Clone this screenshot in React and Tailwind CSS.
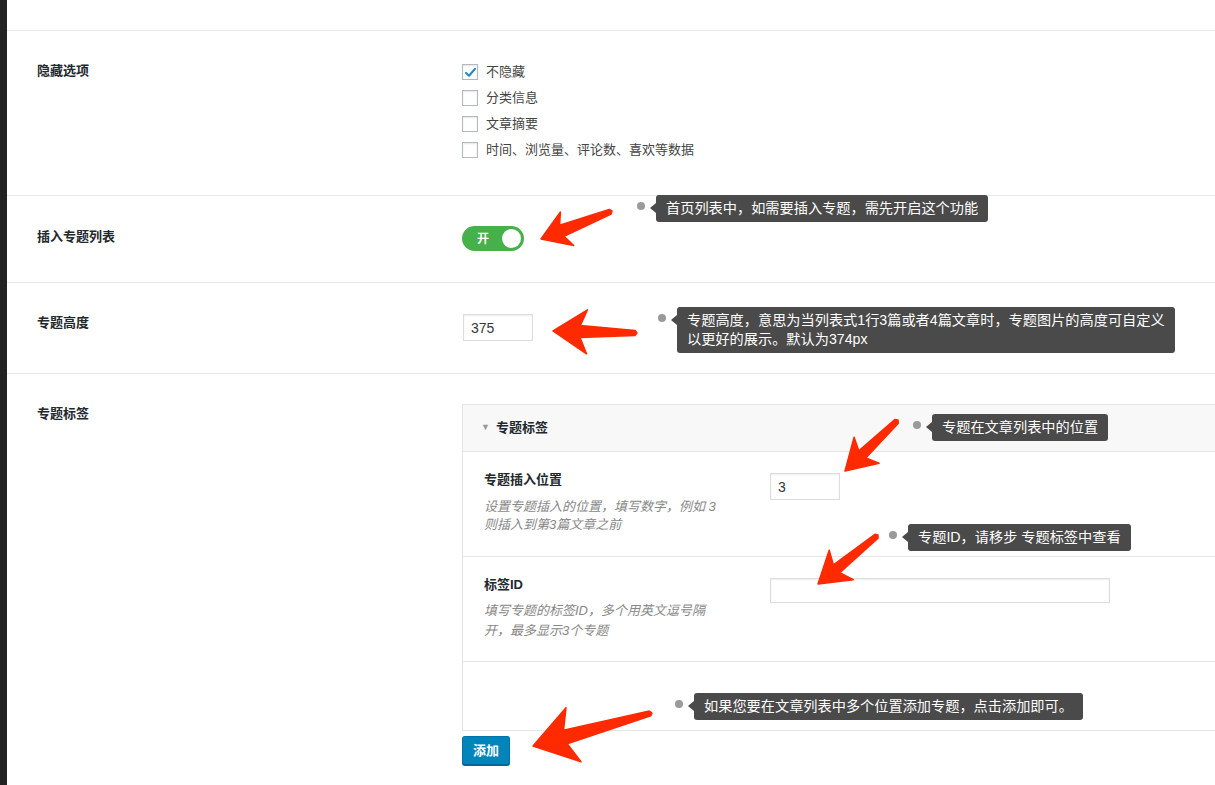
import React from "react";

/**
 * Settings page: hide options, topic-list toggle, topic height and the
 * topic-tag repeater, with screenshot annotations (tooltips + red arrows).
 */

const FONT = "font-['Liberation_Sans','Noto_Sans_CJK_SC',sans-serif]";

const HIDE_OPTIONS = [
  { label: "不隐藏", checked: true },
  { label: "分类信息", checked: false },
  { label: "文章摘要", checked: false },
  { label: "时间、浏览量、评论数、喜欢等数据", checked: false },
];

// annotation bubbles: box left/top, dot sits just left of the box
const TIPS = [
  { x: 656, y: 195, lines: ["首页列表中，如需要插入专题，需先开启这个功能"] },
  {
    x: 677, y: 307,
    lines: ["专题高度，意思为当列表式1行3篇或者4篇文章时，专题图片的高度可自定义", "以更好的展示。默认为374px"],
  },
  { x: 932, y: 414, lines: ["专题在文章列表中的位置"] },
  { x: 908, y: 524, lines: ["专题ID，请移步 专题标签中查看"] },
  { x: 694, y: 693, lines: ["如果您要在文章列表中多个位置添加专题，点击添加即可。"] },
];

// red arrows: tail -> tip, head length / half width
const ARROWS = [
  { tail: [612, 211], tip: [541, 239], hl: 28, hw: 18, sw: 6 },
  { tail: [637, 333], tip: [553, 331], hl: 34, hw: 22, sw: 6 },
  { tail: [898, 420], tip: [845, 471], hl: 30, hw: 18, sw: 5 },
  { tail: [878, 535], tip: [818, 584], hl: 30, hw: 19, sw: 5 },
  { tail: [652, 713], tip: [533, 746], hl: 42, hw: 28, sw: 7 },
];

function arrowPoints({ tail, tip, hl, hw, sw }) {
  const dx = tail[0] - tip[0];
  const dy = tail[1] - tip[1];
  const L = Math.hypot(dx, dy);
  const ux = dx / L, uy = dy / L;
  const nx = -uy, ny = ux;
  const local = [
    [0, 0], [hl, -hw], [hl * 0.8, -sw], [L - 2, -2.5], [L, 0],
    [L - 2, 2.5], [hl * 0.8, sw], [hl, hw],
  ];
  return local
    .map(([a, b]) => `${(tip[0] + ux * a + nx * b).toFixed(1)},${(tip[1] + uy * a + ny * b).toFixed(1)}`)
    .join(" ");
}

export default function App() {
  return (
    <div className={`relative flex min-h-[785px] w-full bg-white text-[#23282d] ${FONT}`}>
      <div className="w-[7px] shrink-0 bg-[#222]" />

      <div className="min-w-0 flex-1">
        <div className="h-[31px] border-b border-[#eaeaea]" />

        <Row label="隐藏选项" labelPad="pt-[27px]">
          <div className="pb-[32px] pt-[28px]">
            {HIDE_OPTIONS.map((o) => (
              <label key={o.label} className="flex h-[26px] items-center gap-[8px] text-[13px] text-[#444]">
                <Checkbox checked={o.checked} />
                <span>{o.label}</span>
              </label>
            ))}
          </div>
        </Row>

        <Row label="插入专题列表" labelPad="pt-[28px]">
          <div className="pb-[31px] pt-[30px]">
            <div className="flex h-[25px] w-[62px] items-center justify-between rounded-full bg-[#46b04a] pl-[15px] pr-[3px]">
              <span className="text-[12px] font-bold text-white">开</span>
              <span className="h-[19px] w-[19px] rounded-full bg-white" />
            </div>
          </div>
        </Row>

        <Row label="专题高度" labelPad="pt-[27px]">
          <div className="pb-[32px] pl-[1px] pt-[31px]">
            <input
              readOnly
              value="375"
              className="h-[27px] w-[70px] border border-[#ddd] px-[7px] text-[14px] text-[#32373c] shadow-[inset_0_1px_2px_rgba(0,0,0,0.07)] outline-none"
            />
          </div>
        </Row>

        <div className="flex">
          <div className="w-[455px] shrink-0 pl-[30px] pt-[27px]">
            <span className="text-[13px] font-semibold leading-[20px]">专题标签</span>
          </div>
          <div className="min-w-0 flex-1 pt-[30px]">
            <div className="border-y border-l border-[#e5e5e5]">
              <div className="flex h-[47px] items-center gap-[6px] border-b border-[#e5e5e5] bg-[#f8f8f8] pl-[18px]">
                <span className="text-[9px] text-[#999]">▼</span>
                <span className="text-[13px] font-semibold">专题标签</span>
              </div>

              <FieldRow
                label="专题插入位置"
                desc={["设置专题插入的位置，填写数字，例如 3", "则插入到第3篇文章之前"]}
                descGap="mt-[8px]"
                leading="leading-[18px]"
              >
                <input
                  readOnly
                  value="3"
                  className="h-[27px] w-[70px] border border-[#ddd] px-[7px] text-[14px] text-[#32373c] shadow-[inset_0_1px_2px_rgba(0,0,0,0.07)] outline-none"
                />
              </FieldRow>

              <FieldRow
                label="标签ID"
                desc={["填写专题的标签ID，多个用英文逗号隔", "开，最多显示3个专题"]}
                descGap="mt-[6px]"
                leading="leading-[20px]"
              >
                <input
                  readOnly
                  value=""
                  className="mt-[-1px] h-[25px] w-[340px] border border-[#ddd] px-[6px] text-[14px] shadow-[inset_0_1px_2px_rgba(0,0,0,0.07)] outline-none"
                />
              </FieldRow>

              <div className="h-[68px]" />
            </div>

            <button className="mt-[5px] h-[29px] w-[48px] rounded-[3px] border border-[#0073aa] border-b-[#006799] bg-[#0085ba] text-[13px] font-semibold text-white shadow-[0_1px_0_#006799]">
              添加
            </button>
          </div>
        </div>
      </div>

      {TIPS.map((t, i) => (
        <Tip key={i} {...t} />
      ))}

      <svg className="pointer-events-none absolute left-0 top-0" width="1215" height="785">
        {ARROWS.map((a, i) => (
          <polygon key={i} points={arrowPoints(a)} fill="#ff2a00" stroke="#ff2a00" strokeWidth="1.5" strokeLinejoin="round" />
        ))}
      </svg>
    </div>
  );
}

function Row({ label, labelPad, children }) {
  return (
    <div className="flex border-b border-[#eaeaea]">
      <div className={`w-[455px] shrink-0 pl-[30px] ${labelPad}`}>
        <span className="text-[13px] font-semibold leading-[20px]">{label}</span>
      </div>
      <div className="min-w-0 flex-1">{children}</div>
    </div>
  );
}

function FieldRow({ label, desc, descGap, leading, children }) {
  return (
    <div className="flex h-[105px] border-b border-[#e5e5e5]">
      <div className="w-[307px] shrink-0 pl-[21px] pt-[18px]">
        <div className="text-[13px] font-semibold leading-[20px]">{label}</div>
        <div className={`${descGap} text-[13px] italic text-[#888] ${leading}`}>
          {desc.map((d) => (
            <div key={d}>{d}</div>
          ))}
        </div>
      </div>
      <div className="pt-[21px]">{children}</div>
    </div>
  );
}

function Checkbox({ checked }) {
  return (
    <span className="flex h-[16px] w-[16px] items-center justify-center border border-[#b4b9be] bg-white shadow-[inset_0_1px_2px_rgba(0,0,0,0.1)]">
      {checked && (
        <svg width="13" height="13" viewBox="0 0 16 16">
          <path d="M2.5 8.5 L6.2 12 L13.5 3.5" fill="none" stroke="#1e8cbe" strokeWidth="2.6" strokeLinecap="round" strokeLinejoin="round" />
        </svg>
      )}
    </span>
  );
}

function Tip({ x, y, lines }) {
  return (
    <div className="absolute flex items-start" style={{ left: x - 19, top: y }}>
      <span className="mr-[5px] mt-[7px] h-[8px] w-[8px] rounded-full bg-[#9a9a9a]" />
      <span className="mt-[8px] h-0 w-0 border-y-[5px] border-r-[6px] border-y-transparent border-r-[#4a4a4a]" />
      <div className="rounded-[3px] bg-[#4a4a4a] px-[10px] py-[4px] text-[14.2px] leading-[19px] text-white">
        {lines.map((l) => (
          <div key={l} className="whitespace-nowrap">{l}</div>
        ))}
      </div>
    </div>
  );
}
